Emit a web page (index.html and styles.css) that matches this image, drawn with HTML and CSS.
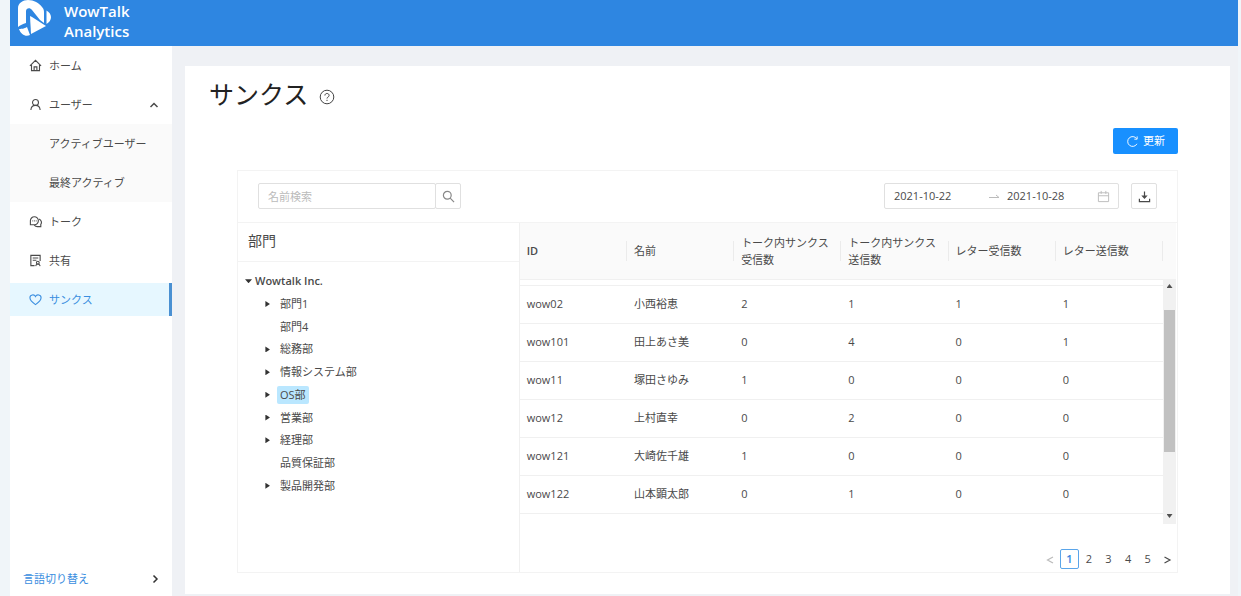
FILE: index.html
```html
<!DOCTYPE html>
<html lang="ja">
<head>
<meta charset="utf-8">
<title>WowTalk Analytics</title>
<link rel="stylesheet" href="styles.css">
</head>
<body>
<div class="app">
  <header class="topbar">
    <svg class="logo" viewBox="0 0 36 38" aria-hidden="true">
      <path fill="#fff" d="M0 27V8C0 3 5 0 10 0c6 0 11 3 14 7 2 2 2 4 2 6v10l-4-3-8-10c-2-3-6-2-6 1v12c-3 1-6 2-8 4z"/>
      <path fill="#fff" d="M12 16l2 1 14 9-15 8z"/>
      <path fill="#fff" d="M1 29c3 0 7-1 8-2l3 8c-4 2-9 0-11-6zM28.500 10.500c6 3.500 6 10 0 13.500z"/>
    </svg>
    <div class="brand">WowTalk<br>Analytics</div>
  </header>
  <div class="body">
    <nav class="sidebar">
      <ul class="menu">
        <li><a class="item" href="#"><svg class="ico" viewBox="0 0 14 14"><path d="M1 7.500 7 1.500l6 6M2.700 6.500v6h8.600v-6M5.500 12.500V8.500h3v4"/></svg>ホーム</a></li>
        <li><a class="item" href="#"><svg class="ico" viewBox="0 0 14 14"><circle cx="7" cy="4.800" r="3.200"/><path d="M2 13c.2-3 2-5 5-5s4.800 2 5 5"/></svg>ユーザー<svg class="arrow" viewBox="0 0 10 10"><path d="M1.500 7 5 3.500 8.500 7"/></svg></a>
          <ul class="submenu">
            <li><a class="item" href="#">アクティブユーザー</a></li>
            <li><a class="item" href="#">最終アクティブ</a></li>
          </ul>
        </li>
        <li><a class="item" href="#"><svg class="ico" viewBox="0 0 14 14"><path d="M1.500 10.500V6.300a4.300 4.300 0 1 1 4.300 4.200zM10.800 4.200c3 1.300 3 4.500 1.900 5.800v2.500H9c-1.500 0-2.500-.5-3.300-1.500M3.700 6.300h.8M5.500 6.300h.8M7.300 6.300h.8"/></svg>トーク</a></li>
        <li><a class="item" href="#"><svg class="ico" viewBox="0 0 14 14"><path d="M6 12.500H2v-11h10v6M4 4.300h6M4 6.800h4"/><circle cx="9.500" cy="9.300" r="1.500"/><path d="M7.200 13c.2-1.500 1-2.200 2.300-2.200s2.300.7 2.500 2.200"/></svg>共有</a></li>
        <li><a class="item active" href="#"><svg class="ico" viewBox="0 0 14 14"><path d="M7 12.500C4 10.500 1 8.500 1 5.200 1 1.800 5.500 1 7 3.800 8.500 1 13 1.800 13 5.200c0 3.300-3 5.300-6 7.300z"/></svg>サンクス</a></li>
      </ul>
      <a class="language" href="#">言語切り替え<svg class="arrow" viewBox="0 0 10 10"><path d="M3.500 1.500 7 5 3.500 8.500"/></svg></a>
    </nav>
    <main class="card">
      <h1 class="title">サンクス<svg class="help" viewBox="0 0 16 16"><circle cx="8" cy="8" r="6.800"/><path d="M5.900 6.500c0-2.700 4.200-2.700 4.200 0 0 1.500-2.100 1.500-2.100 3M8 10.800v1.200"/></svg></h1>
      <div class="actions">
        <button class="refresh" type="button"><svg class="ico" viewBox="0 0 14 14"><path d="M11.800 9.500A5.300 5.300 0 1 1 11.500 4M12 1.500V4.500H9"/></svg>更新</button>
      </div>
      <section class="panel">
        <div class="toolbar">
          <form class="search">
            <input type="text" placeholder="名前検索" aria-label="名前検索">
            <button type="button" aria-label="検索"><svg class="ico" viewBox="0 0 14 14"><circle cx="5.700" cy="5.700" r="4.200"/><path d="M8.800 8.800 13 13"/></svg></button>
          </form>
          <div class="tools">
            <div class="range">
              <input type="text" value="2021-10-22" aria-label="開始日">
              <svg class="to" viewBox="0 0 12 8"><path d="M1 5.500h10L8 3"/></svg>
              <input type="text" value="2021-10-28" aria-label="終了日">
              <svg class="ico calendar" viewBox="0 0 14 14"><path d="M1.500 3h11v9.500h-11zM1.500 6.200h11M4.500 1v3.200M9.500 1v3.200"/></svg>
            </div>
            <button class="download" type="button" aria-label="ダウンロード"><svg class="ico" viewBox="0 0 14 14"><path d="M1.500 9.500v3h11v-3M7 1.500v7M5 6.500l2 2.300 2-2.300z"/></svg></button>
          </div>
        </div>
        <div class="split">
          <div class="departments">
            <h2 class="heading">部門</h2>
            <ul class="tree">
              <li class="root"><span class="caret open"></span><span class="node">Wowtalk Inc.</span></li>
              <li><span class="caret"></span><span class="node">部門1</span></li>
              <li><span class="caret none"></span><span class="node">部門4</span></li>
              <li><span class="caret"></span><span class="node">総務部</span></li>
              <li><span class="caret"></span><span class="node">情報システム部</span></li>
              <li><span class="caret"></span><span class="node selected">OS部</span></li>
              <li><span class="caret"></span><span class="node">営業部</span></li>
              <li><span class="caret"></span><span class="node">経理部</span></li>
              <li><span class="caret none"></span><span class="node">品質保証部</span></li>
              <li><span class="caret"></span><span class="node">製品開発部</span></li>
            </ul>
          </div>
          <div class="results">
            <div class="scroller">
              <table class="grid">
                <thead><tr><th><div>ID</div></th><th><div>名前</div></th><th><div>トーク内サンクス<br>受信数</div></th><th><div>トーク内サンクス<br>送信数</div></th><th><div>レター受信数</div></th><th><div>レター送信数</div></th></tr></thead>
                <tbody>
                  <tr class="clipped" aria-hidden="true"><td colspan="6"></td></tr>
                  <tr><td>wow02</td><td>小西裕恵</td><td>2</td><td>1</td><td>1</td><td>1</td></tr>
                  <tr><td>wow101</td><td>田上あさ美</td><td>0</td><td>4</td><td>0</td><td>1</td></tr>
                  <tr><td>wow11</td><td>塚田さゆみ</td><td>1</td><td>0</td><td>0</td><td>0</td></tr>
                  <tr><td>wow12</td><td>上村直幸</td><td>0</td><td>2</td><td>0</td><td>0</td></tr>
                  <tr><td>wow121</td><td>大崎佐千雄</td><td>1</td><td>0</td><td>0</td><td>0</td></tr>
                  <tr><td>wow122</td><td>山本顕太郎</td><td>0</td><td>1</td><td>0</td><td>0</td></tr>
                </tbody>
              </table>
              <div class="gutter" aria-hidden="true">
                <div class="corner"></div>
                <div class="scrollbar"><span class="up"></span><span class="thumb"></span><span class="down"></span></div>
              </div>
            </div>
            <div class="pages">
              <button type="button" class="off" aria-label="前へ"><svg class="arrow" viewBox="0 0 10 10"><path d="M8 2 2.500 5 8 8"/></svg></button>
              <button type="button" class="current">1</button>
              <button type="button">2</button>
              <button type="button">3</button>
              <button type="button">4</button>
              <button type="button">5</button>
              <button type="button" aria-label="次へ"><svg class="arrow" viewBox="0 0 10 10"><path d="M2.500 2 8 5 2.500 8"/></svg></button>
            </div>
          </div>
        </div>
      </section>
    </main>
  </div>
</div>
</body>
</html>
```
FILE: styles.css
```css
* { box-sizing: border-box; }
body {
  margin: 0;
  background: #f0f5f9;
  color: #4a4a4a;
  font: 11px/18px "Open Sans", "Noto Sans CJK JP", sans-serif;
}
ul { margin: 0; padding: 0; list-style: none; }
a { color: inherit; text-decoration: none; }
button, input { font: inherit; color: inherit; }
button { padding: 0; cursor: pointer; }
svg { fill: none; stroke: currentColor; stroke-width: 1; flex: none; }
.ico { width: 13px; height: 13px; }
.arrow { width: 10px; height: 10px; stroke-width: 1.5; }

.app { display: flex; flex-direction: column; min-height: 100vh; margin: 0 3px 0 10px; background: #eff1f5; }
.topbar { display: flex; height: 46px; padding-left: 8px; gap: 10px; background: #2e86e1; color: #fff; }
.logo { width: 36px; height: 38px; stroke: none; }
.brand { padding-top: 1px; font-size: 15px; font-weight: 600; line-height: 20px; }

.body { display: flex; flex: 1; gap: 13px; }
.sidebar { display: flex; flex-direction: column; justify-content: space-between; width: 162px; flex: none; background: #fff; }
.item { display: flex; align-items: center; gap: 7px; height: 33px; padding: 0 13px 0 19px; }
.item .ico { stroke-width: 1.2; }
.item .arrow { margin-left: auto; }
.menu li { padding: 3px 0; }
.menu > li:has(.submenu) { padding-bottom: 0; }
.submenu { margin-top: 3px; background: #fafafa; }
.submenu .item { padding-left: 39px; }
.item.active { background: #e6f7ff; color: #3a8ee0; border-right: 3px solid #4a90d2; }
.language { display: flex; align-items: center; justify-content: space-between; padding: 0 12px 8px 13px; color: #3a8ee0; }
.language .arrow { color: #333; }

.card { flex: 1; min-width: 0; margin: 20px 8px 2px 0; padding: 8px 52px 20px; background: #fff; }
.title { display: flex; align-items: center; gap: 11px; margin: 0 0 0 -28px; color: #222; font-size: 25px; font-weight: 400; line-height: 40px; }
.help { width: 16px; height: 16px; margin-top: 6px; color: #444; }
.actions { display: flex; justify-content: flex-end; padding: 14px 0 16px; }
.refresh { display: flex; align-items: center; justify-content: center; gap: 4px; width: 65px; height: 26px; border: 0; border-radius: 2px; background: #1890ff; color: #fff; }

.panel { border: 1px solid #f3f3f3; }
.toolbar { display: flex; justify-content: space-between; padding: 12px 20px 13px; }
.search { display: flex; }
.search input, .range { height: 26px; border: 1px solid #e0e0e0; border-radius: 2px; background: #fff; }
.search input { width: 178px; padding: 0 9px; }
.search input::placeholder { color: #bbb; }
.search button, .download { display: flex; align-items: center; justify-content: center; width: 26px; height: 26px; border: 1px solid #e0e0e0; border-radius: 2px; background: #fff; }
.search button { margin-left: -1px; color: #888; }
.search .ico, .download .ico { stroke-width: 1.3; }
.tools { display: flex; gap: 12px; }
.range { display: flex; align-items: center; width: 235px; padding: 0 8px 0 9px; }
.range input { width: 94px; padding: 0; border: 0; background: none; }
.range input:last-of-type { width: 90px; }
.to { width: 12px; height: 8px; margin-right: 7px; color: #bbb; }
.calendar { color: #bbb; }

.split { display: flex; border-top: 1px solid #f3f3f3; }
.departments { width: 30%; flex: none; border-right: 1px solid #f0f0f0; }
.heading { margin: 0; padding: 8px 10px 10px; border-bottom: 1px solid #f3f3f3; font-size: 14px; font-weight: 400; line-height: 20px; }
.tree { display: grid; grid-auto-rows: 1fr; height: 235px; padding: 8px 7px 0; }
.tree li { display: flex; align-items: center; gap: 6px; padding-left: 19px; }
.tree .root { padding-left: 0; gap: 0; font-weight: 600; }
.node { padding: 0 3px; border-radius: 2px; }
.selected { background: #bae7ff; }
.caret { width: 7px; height: 6px; background: #333; clip-path: polygon(20% 0, 85% 50%, 20% 100%); }
.caret.open { height: 4px; clip-path: polygon(0 0, 100% 0, 50% 100%); }
.caret.none { background: none; }

.results { display: flex; flex: 1; min-width: 0; flex-direction: column; }
.scroller { display: flex; }
.grid { flex: 1; width: 100%; table-layout: fixed; border-collapse: collapse; align-self: flex-start; }
.grid th, .grid td { padding: 0 0 0 7px; border-bottom: 1px solid #f0f0f0; text-align: left; }
.grid td { height: 38px; }
.grid th { height: 56px; background: #fafafa; font-weight: 400; }
.grid th:first-child { font-weight: 600; }
.grid th div { display: flex; flex-direction: column; justify-content: center; height: 20px; line-height: 17px; white-space: nowrap; border-right: 1px solid #ebebeb; }
.grid .clipped td { height: 6px; }
.gutter { display: flex; flex: none; flex-direction: column; width: 14px; height: 301px; padding-right: 1px; }
.corner { height: 56px; flex: none; background: #fafafa; }
.scrollbar { display: flex; flex: 1; flex-direction: column; align-items: center; padding: 5px 1px 6px; background: #f1f1f1; }
.up, .down { width: 6px; height: 4px; background: #505050; clip-path: polygon(50% 0, 100% 100%, 0 100%); }
.down { margin-top: auto; clip-path: polygon(0 0, 100% 0, 50% 100%); }
.thumb { width: 100%; height: 142px; margin-top: 22px; background: #c1c1c1; }
.pages { display: grid; grid-template-columns: repeat(7, 1fr); width: 137px; margin: 25px 0 3px auto; }
.pages button { height: 20px; border: 1px solid transparent; border-radius: 2px; background: none; }
.pages .arrow { stroke-width: 1.2; vertical-align: middle; }
.pages .current { border-color: #5aa5ea; color: #3a86e0; font-weight: 600; }
.pages .off { color: #bbb; }
```
